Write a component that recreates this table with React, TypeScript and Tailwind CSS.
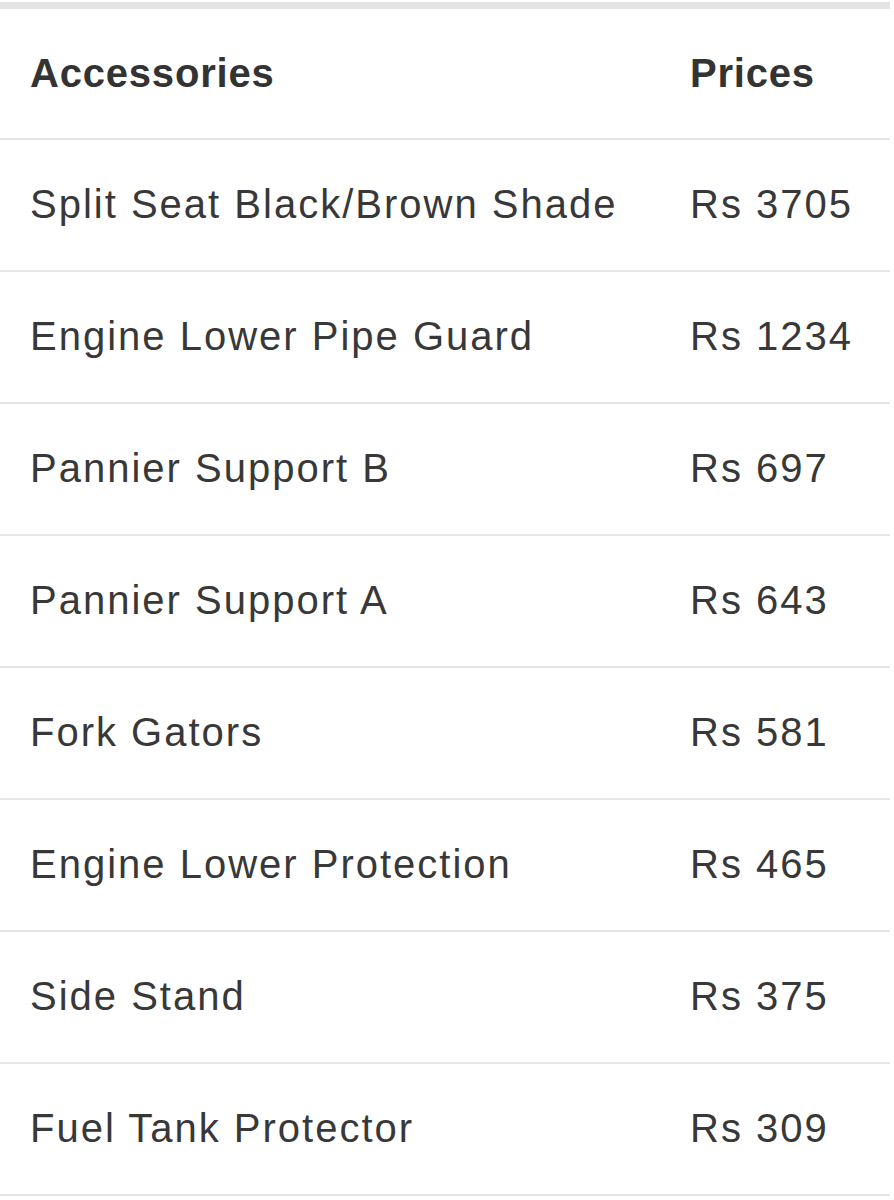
import React from "react";

const rows: [string, string][] = [
  ["Split Seat Black/Brown Shade", "Rs 3705"],
  ["Engine Lower Pipe Guard", "Rs 1234"],
  ["Pannier Support B", "Rs 697"],
  ["Pannier Support A", "Rs 643"],
  ["Fork Gators", "Rs 581"],
  ["Engine Lower Protection", "Rs 465"],
  ["Side Stand", "Rs 375"],
  ["Fuel Tank Protector", "Rs 309"],
];

export default function App() {
  return (
    <div className="w-[894px] h-[1200px] bg-white overflow-hidden pt-[2px] font-['Liberation_Sans',Arial,sans-serif]">
      <div className="w-[890px] border-t-[7px] border-[#e4e4e4]">
        <div className="flex items-center h-[131px] pb-[2px] border-b-2 border-[#e6e6e6] text-[#333] font-bold text-[40px] tracking-[0.8px]">
          <div className="w-[690px] pl-[30px]">Accessories</div>
          <div>Prices</div>
        </div>
        {rows.map(([name, price]) => (
          <div
            key={name}
            className="flex items-center h-[132px] pb-[3px] border-b-2 border-[#e6e6e6] text-[#383838] text-[40px] tracking-[2px]"
          >
            <div className="w-[690px] pl-[30px]">{name}</div>
            <div>{price}</div>
          </div>
        ))}
      </div>
    </div>
  );
}
